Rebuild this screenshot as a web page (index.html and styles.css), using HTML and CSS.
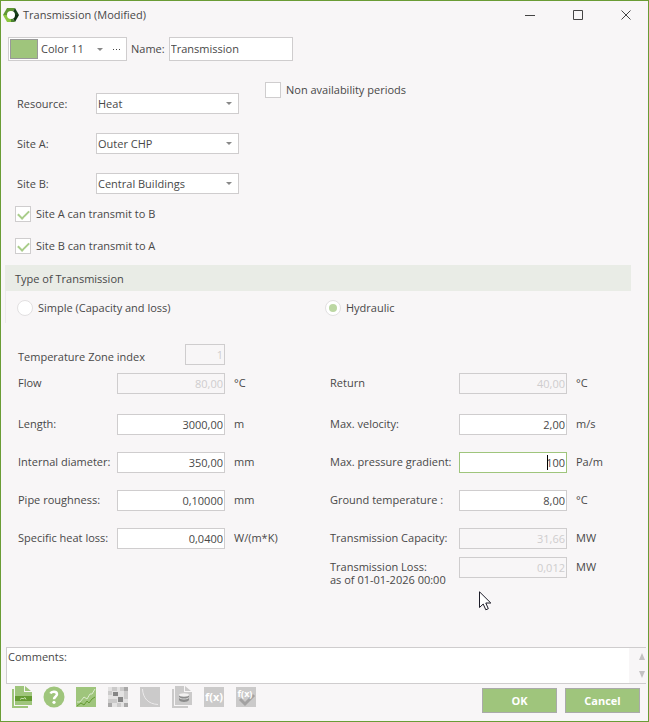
FILE: index.html
```html
<!DOCTYPE html>
<html lang="en">
<head>
<meta charset="utf-8">
<meta name="viewport" content="width=device-width, initial-scale=1">
<title>Transmission (Modified)</title>
<link rel="stylesheet" href="styles.css">
</head>
<body>

<form class="window">

<header class="titlebar">
  <svg class="logo" width="16" height="16" viewBox="0 0 16 16" aria-hidden="true">
    <path fill="#5f9732" d="M4 1H12L8 8H0Z"/>
    <path fill="#17401a" d="M12 1L16 8H8Z"/>
    <path fill="#0c2d10" d="M16 8L12 15L8 8Z"/>
    <path fill="#4c8430" d="M12 15H7L8 8Z"/>
    <path fill="#8cc63f" d="M0 8L4 15H8V8Z"/>
    <circle cx="8" cy="8" r="4" fill="#fff"/>
  </svg>
  <h1>Transmission (Modified)</h1>
  <button type="button" class="winbtn" aria-label="Minimize">
    <svg width="12" height="12"><path d="M1 6.500H11"/></svg>
  </button>
  <button type="button" class="winbtn" aria-label="Maximize">
    <svg width="12" height="12"><path d="M1.500 1.500H10.500V10.500H1.500Z"/></svg>
  </button>
  <button type="button" class="winbtn" aria-label="Close">
    <svg width="12" height="12"><path d="M1.500 1.500L10.500 10.500M10.500 1.500L1.500 10.500"/></svg>
  </button>
</header>

<div class="namebar">
  <div class="color">
    <span class="swatch"></span>
    <span class="drop">
      <select aria-label="Color"><option>Color 11</option></select>
    </span>
    <button type="button" class="more" aria-label="More colors"><i></i><i></i><i></i></button>
  </div>
  <label for="name">Name:</label>
  <input class="name" id="name" type="text" value="Transmission">
</div>

<div class="general">
  <div class="sites">
    <div class="site">
      <label for="resource">Resource:</label>
      <span class="drop boxed"><select id="resource"><option>Heat</option></select></span>
    </div>
    <div class="site">
      <label for="site-a">Site A:</label>
      <span class="drop boxed"><select id="site-a"><option>Outer CHP</option></select></span>
    </div>
    <div class="site">
      <label for="site-b">Site B:</label>
      <span class="drop boxed"><select id="site-b"><option>Central Buildings</option></select></span>
    </div>
  </div>
  <label class="check"><input type="checkbox"> Non availability periods</label>
</div>

<div class="directions">
  <label class="check"><input type="checkbox" checked> Site A can transmit to B</label>
  <label class="check"><input type="checkbox" checked> Site B can transmit to A</label>
</div>

<section class="type">
  <h2>Type of Transmission</h2>
  <div class="radios">
    <label class="check"><input type="radio" name="type"> Simple (Capacity and loss)</label>
    <label class="check"><input type="radio" name="type" checked> Hydraulic</label>
  </div>
</section>

<div class="zone">
  <label for="zone">Temperature Zone index</label>
  <input id="zone" type="text" value="1" disabled>
</div>

<div class="columns">
  <div class="column">
    <div class="field first">
      <label for="flow">Flow</label>
      <input id="flow" type="text" value="80,00" disabled>
      <span>°C</span>
    </div>
    <div class="field">
      <label for="length">Length:</label>
      <input id="length" type="text" value="3000,00">
      <span>m</span>
    </div>
    <div class="field">
      <label for="diameter">Internal diameter:</label>
      <input id="diameter" type="text" value="350,00">
      <span>mm</span>
    </div>
    <div class="field">
      <label for="roughness">Pipe roughness:</label>
      <input id="roughness" type="text" value="0,10000">
      <span>mm</span>
    </div>
    <div class="field">
      <label for="heatloss">Specific heat loss:</label>
      <input id="heatloss" type="text" value="0,0400">
      <span>W/(m*K)</span>
    </div>
  </div>

  <div class="column wide">
    <div class="field first">
      <label for="return">Return</label>
      <input id="return" type="text" value="40,00" disabled>
      <span>°C</span>
    </div>
    <div class="field">
      <label for="velocity">Max. velocity:</label>
      <input id="velocity" type="text" value="2,00">
      <span>m/s</span>
    </div>
    <div class="field editing">
      <label for="gradient">Max. pressure gradient:</label>
      <input id="gradient" type="text" value="100">
      <i class="caret"></i>
      <span>Pa/m</span>
    </div>
    <div class="field">
      <label for="ground">Ground temperature :</label>
      <input id="ground" type="text" value="8,00">
      <span>°C</span>
    </div>
    <div class="field tight">
      <label for="capacity">Transmission Capacity:</label>
      <input id="capacity" type="text" value="31,66" disabled>
      <span>MW</span>
    </div>
    <div class="field double">
      <label for="loss">Transmission Loss:<br>as of 01-01-2026 00:00</label>
      <input id="loss" type="text" value="0,012" disabled>
      <span>MW</span>
    </div>
    <svg class="pointer" width="13" height="20" viewBox="0 0 13 20" aria-hidden="true">
      <path d="M.5 .8V16.500L4.200 13L6.800 18.800L9.300 17.700L6.800 12H11.800Z" fill="#fff" stroke="#1c1c28"/>
    </svg>
  </div>
</div>

<div class="comments">
  <textarea aria-label="Comments">Comments:</textarea>
  <div class="scroll">
    <svg width="8" height="7"><path d="M4 0L7 7H1Z"/></svg>
    <svg width="8" height="7"><path d="M1 0H7L4 7Z"/></svg>
  </div>
</div>

<footer class="bottom">
  <div class="tools">
    <button type="button" aria-label="Copy picture">
      <svg width="22" height="24" viewBox="0 0 22 24">
        <path fill="#9fc57c" d="M1 4H3V21H17V23H1ZM4 1H13V7H21V20H4ZM14 1L20 6H14Z"/>
        <path fill="#659b33" d="M4 11H21V16H4Z"/>
        <path fill="none" stroke="#c5dfae" d="M9 14.500L11 13L12 14L14 12.500L15 14.500"/>
      </svg>
    </button>
    <button type="button" aria-label="Help">
      <svg width="22" height="24" viewBox="0 0 22 24">
        <circle cx="11" cy="12" r="10.500" fill="#9fc57c"/>
        <path fill="none" stroke="#fff" stroke-width="2.500" d="M7.500 8.500C8.500 6 14 6 14 9.300C14 11.500 11 11.500 11 14.300"/>
        <circle cx="11" cy="17.300" r="1.600" fill="#fff"/>
      </svg>
    </button>
    <button type="button" aria-label="Graph">
      <svg width="22" height="24" viewBox="0 0 22 24">
        <path fill="#9fc57c" d="M1 2H21V22H1Z"/>
        <path fill="none" stroke="#dcebcf" d="M2 17L5 17L9 12L12 14L15 9L17 9L20 4"/>
        <path fill="none" stroke="#659b33" d="M2 21L6 18L9 20L12 16L14 18L17 14L20 12"/>
      </svg>
    </button>
    <button type="button" aria-label="Matrix">
      <svg width="22" height="24" viewBox="0 0 22 24">
        <path fill="#e3e2e2" d="M1 2H21V22H1Z"/>
        <path fill="#cbcaca" d="M5 2h5v4h-5zM13 2h4v4h-4zM1 6h4v4h-4zM17 10h4v4h-4zM5 14h5v4h-5zM1 14h4v4h-4zM17 6h4v4h-4zM10 18h4v4h-4z"/>
        <path fill="#a9a8a8" d="M17 2h4v4h-4zM1 18h4v4h-4zM17 18h4v4h-4z"/>
        <path fill="#858585" d="M6 7h5v4h-5zM11 12h5v5h-5z"/>
      </svg>
    </button>
    <button type="button" aria-label="Curve">
      <svg width="22" height="24" viewBox="0 0 22 24">
        <path fill="#cbcaca" d="M1 2H21V22H1Z"/>
        <path fill="none" stroke="#eceaeb" d="M3.500 4C4 13 9 19 19 19.500"/>
      </svg>
    </button>
    <button type="button" aria-label="Copy data">
      <svg width="22" height="24" viewBox="0 0 22 24">
        <path fill="#cbcaca" d="M1 4H3V21H17V23H1ZM4 1H13V7H21V20H4ZM14 1L20 6H14Z"/>
        <path fill="#8c8c8c" d="M8 10V15C9 17.500 17 17.500 18 15V10Z"/>
        <ellipse cx="13" cy="10" rx="5" ry="1.700" fill="#f2f1f1"/>
        <path fill="none" stroke="#d8d8d8" d="M8 12.500C10 14.500 16 14.500 18 12.500"/>
      </svg>
    </button>
    <button type="button" aria-label="Function">
      <svg width="22" height="24" viewBox="0 0 22 24">
        <path fill="#cbcaca" d="M1 2H21V22H1Z"/>
        <text x="11" y="16" font-size="11">f(x)</text>
      </svg>
    </button>
    <button type="button" aria-label="Check function">
      <svg width="22" height="24" viewBox="0 0 22 24">
        <path fill="#cbcaca" d="M1 2H21V22H1Z"/>
        <path fill="none" stroke="#a3a2a2" stroke-width="3" d="M5 14L10 19L19 10"/>
        <text x="10" y="12" font-size="9">f(x)</text>
      </svg>
    </button>
  </div>
  <button type="submit" class="action">OK</button>
  <button type="button" class="action">Cancel</button>
</footer>

</form>

</body>
</html>
```
FILE: styles.css
```css
* {
  box-sizing: border-box;
}

body {
  margin: 0;
  font: 11px/16px "Open Sans", "Noto Sans", sans-serif;
  color: #484848;
  background: #f8f6f7;
}

h1, h2 {
  margin: 0;
  font-size: 11px;
  font-weight: normal;
}

button, input, select, textarea {
  margin: 0;
  padding: 0;
  font: inherit;
  color: inherit;
}

label {
  white-space: nowrap;
}

.window {
  display: flex;
  flex-direction: column;
  min-height: 100vh;
  border: 1px solid #6a9c35;
}

/* title bar */
.titlebar {
  display: flex;
  align-items: center;
  gap: 4px;
  height: 28px;
  padding-left: 2px;
}
.titlebar h1 {
  flex: 1;
}
.winbtn {
  width: 44px;
  height: 28px;
  border: none;
  background: none;
}
.winbtn svg {
  display: block;
  margin: 0 auto;
  fill: none;
  stroke: #444;
}

/* color and name */
.namebar {
  display: flex;
  align-items: center;
  gap: 4px;
  padding: 8px 7px 0;
}
.color {
  display: flex;
  align-items: center;
  width: 119px;
  height: 24px;
  padding: 0 1px;
  border: 1px solid #cfcdce;
  background: #fff;
}
.swatch {
  width: 28px;
  height: 20px;
  border: 1px solid #999;
  background: #9fc57c;
}
.color .drop {
  width: 71px;
}
.more {
  display: flex;
  gap: 2px;
  padding: 4px;
  border: none;
  background: none;
}
.more i {
  width: 1px;
  height: 1px;
  background: #444;
}
input[type=text] {
  height: 21px;
  border: 1px solid #cfcdce;
  background: #fff;
}
input.name {
  width: 124px;
  height: 24px;
  padding: 0 1px 2px;
}

/* drop-downs */
.drop {
  position: relative;
  display: block;
}
.drop select {
  display: block;
  width: 100%;
  height: 19px;
  padding-left: 3px;
  border: none;
  background: none;
  appearance: none;
}
.drop::after {
  content: "";
  position: absolute;
  top: 8px;
  right: 6px;
  border: 3px solid transparent;
  border-top-color: #888;
  pointer-events: none;
}
.drop.boxed {
  width: 143px;
  border: 1px solid #cfcdce;
  background: #fff;
}
.drop.boxed select {
  padding-left: 1px;
}

/* general settings */
.general {
  display: flex;
  align-items: flex-start;
  gap: 26px;
  padding: 21px 16px 0;
}
.sites {
  display: flex;
  flex-direction: column;
  gap: 19px;
  padding-top: 11px;
}
.site {
  display: flex;
  align-items: center;
}
.site label {
  width: 79px;
}
.check {
  display: flex;
  align-items: center;
  gap: 5px;
}
.check input {
  display: grid;
  place-content: center;
  width: 16px;
  height: 16px;
  border: 1px solid #cfcdce;
  background: #fff;
  appearance: none;
}
.check input[type=checkbox]:checked::before {
  content: "";
  width: 9px;
  height: 5px;
  border: solid #a9cd8a;
  border-width: 0 0 2px 2px;
  transform: translateY(-1px) rotate(-45deg);
}
.check input[type=radio] {
  border-color: #e2e0e1;
  border-radius: 50%;
}
.check input[type=radio]:checked::before {
  content: "";
  width: 8px;
  height: 8px;
  border-radius: 50%;
  background: #bcd7a3;
}
.directions {
  display: flex;
  flex-direction: column;
  align-items: flex-start;
  gap: 16px;
  padding: 12px 14px 11px;
}

/* type of transmission */
.type {
  margin: 0 17px 0 4px;
}
.type h2 {
  padding: 6px 10px 4px;
  background: #e9ece6;
}
.radios {
  display: grid;
  grid-template-columns: 308px 1fr;
  padding: 9px 11px 7px;
  border-left: 1px solid #eceaeb;
}

.zone {
  display: flex;
  padding: 21px 17px 8px;
}
.zone label {
  width: 167px;
  padding-top: 5px;
}
.zone input {
  width: 40px;
}
.zone input, .field input {
  padding: 0 1px;
  text-align: right;
}
input[type=text]:disabled {
  color: #cfcdce;
  background: #f8f6f7;
}

/* value columns */
.columns {
  display: grid;
  grid-template-columns: 312px 1fr;
  padding: 0 17px;
}
.column {
  position: relative;
}
.field {
  position: relative;
  display: grid;
  grid-template-columns: 99px 108px 1fr;
  align-items: center;
  height: 21px;
  margin-bottom: 17px;
}
.wide .field {
  grid-template-columns: 129px 108px 1fr;
}
.field span {
  padding-left: 9px;
}
.field label, .field span {
  padding-bottom: 2px;
}
.field.first {
  margin-bottom: 20px;
}
.field.tight {
  margin-bottom: 8px;
}
.field.double {
  align-items: start;
}
.double label {
  line-height: 13px;
  padding-top: 3px;
}
.double span {
  padding-top: 2px;
}
.field.editing input {
  border-color: #9fc57c;
}
.caret {
  position: absolute;
  left: 217px;
  top: 3px;
  width: 1px;
  height: 15px;
  background: #000;
}
.pointer {
  position: absolute;
  left: 149px;
  top: 218px;
}

/* comments */
.comments {
  display: flex;
  height: 37px;
  margin: auto 2px 0 5px;
  border: solid #cfcdce;
  border-width: 1px 0 1px 1px;
}
.comments textarea {
  flex: 1;
  padding: 1px;
  border: none;
  background: #fff;
  resize: none;
  overflow: hidden;
}
.scroll {
  display: flex;
  flex-direction: column;
  align-items: flex-end;
  justify-content: space-between;
  width: 17px;
  padding: 5px 0;
}
.scroll svg {
  fill: #c3c1c2;
}

/* bottom bar */
.bottom {
  display: flex;
  align-items: flex-end;
  gap: 8px;
  padding: 1px 8px 8px 10px;
}
.tools {
  display: flex;
  flex: 1;
  gap: 10px;
  height: 28px;
}
.tools button {
  width: 22px;
  height: 24px;
  border: none;
  background: none;
}
.tools svg {
  display: block;
}
.tools text {
  font-weight: bold;
  text-anchor: middle;
  fill: #fff;
}
.action {
  width: 75px;
  height: 25px;
  border: 1px solid #aaa;
  font-weight: bold;
  color: #fff;
  background: #9fc57c;
}
```
